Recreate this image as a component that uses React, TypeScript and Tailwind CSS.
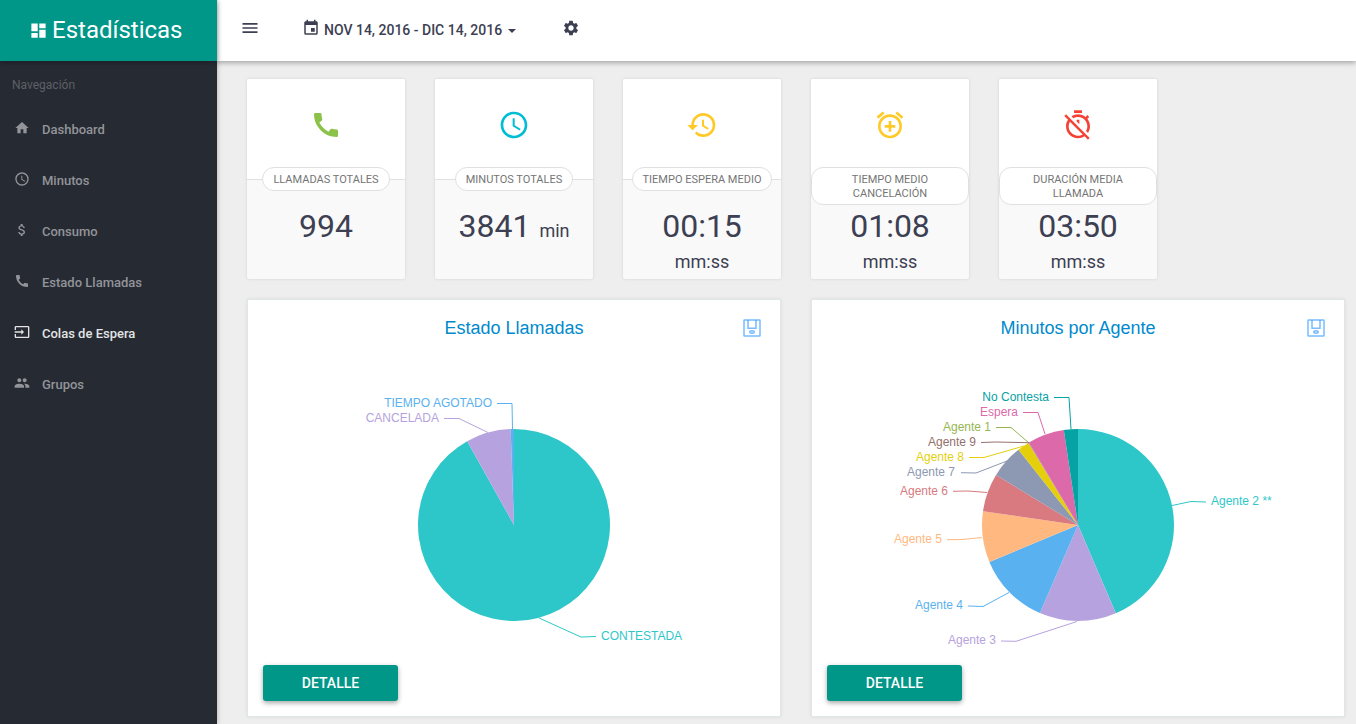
import type { ReactNode } from 'react';
import type { IconType } from 'react-icons';
import {
  MdAccessTime,
  MdAlarmAdd,
  MdAttachMoney,
  MdCall,
  MdDashboard,
  MdEvent,
  MdHistory,
  MdHome,
  MdInput,
  MdMenu,
  MdPeople,
  MdSettings,
} from 'react-icons/md';

type NavItem = { label: string; icon: IconType; active?: boolean };

const navItems: NavItem[] = [
  { label: 'Dashboard', icon: MdHome },
  { label: 'Minutos', icon: MdAccessTime },
  { label: 'Consumo', icon: MdAttachMoney },
  { label: 'Estado Llamadas', icon: MdCall },
  { label: 'Colas de Espera', icon: MdInput, active: true },
  { label: 'Grupos', icon: MdPeople },
];

function TimerOffIcon({ className }: { className?: string }) {
  return (
    <svg viewBox="0 0 24 24" fill="currentColor" className={className} aria-hidden="true">
      <path d="M19.04 4.55l-1.42 1.42C16.07 4.74 14.12 4 12 4c-1.83 0-3.53.55-4.95 1.48l1.46 1.46C9.53 6.35 10.73 6 12 6c3.87 0 7 3.13 7 7 0 1.27-.35 2.47-.94 3.49l1.45 1.45C20.45 16.53 21 14.83 21 13c0-2.12-.74-4.07-1.97-5.61l1.42-1.42-1.41-1.42zM15 1H9v2h6V1zm-4 8.44l2 2V8h-2v1.44zM3.02 4L1.75 5.27 4.5 8.03C3.55 9.45 3 11.16 3 13c0 4.97 4.02 9 9 9 1.84 0 3.55-.55 4.98-1.5l2.5 2.5 1.27-1.27-7.71-7.71L3.02 4zM12 20c-3.87 0-7-3.13-7-7 0-1.28.35-2.48.95-3.52l9.56 9.56c-1.03.61-2.23.96-3.51.96z" />
    </svg>
  );
}

type Stat = { label: string; value: string; unit?: string; stacked?: boolean; icon: IconType; color: string };

const stats: Stat[] = [
  { label: 'Llamadas totales', value: '994', icon: MdCall, color: 'text-[#8bc34a]' },
  { label: 'Minutos totales', value: '3841', unit: 'min', icon: MdAccessTime, color: 'text-[#00bcd4]' },
  { label: 'Tiempo espera medio', value: '00:15', unit: 'mm:ss', stacked: true, icon: MdHistory, color: 'text-[#ffca28]' },
  { label: 'Tiempo medio cancelación', value: '01:08', unit: 'mm:ss', stacked: true, icon: MdAlarmAdd, color: 'text-[#ffca28]' },
  { label: 'Duración media llamada', value: '03:50', unit: 'mm:ss', stacked: true, icon: TimerOffIcon, color: 'text-[#f44336]' },
];

/* start and end are clockwise degrees from twelve o'clock */
type Slice = {
  name: string;
  color: string;
  start: number;
  end: number;
  line: string;
  x: number;
  y: number;
  anchor: 'start' | 'end';
};

const callStatus: Slice[] = [
  { name: 'CONTESTADA', color: '#2ec7c9', start: 0, end: 330.8, line: '291,318 333,337 348,336.5', x: 353, y: 336, anchor: 'start' },
  { name: 'CANCELADA', color: '#b6a2de', start: 330.8, end: 358, line: '240,132.5 211,118.5 196,118.5', x: 191, y: 118, anchor: 'end' },
  { name: 'TIEMPO AGOTADO', color: '#5ab1ef', start: 358, end: 360, line: '264.5,129 264,103.5 249,103.5', x: 244, y: 103, anchor: 'end' },
];

const agentMinutes: Slice[] = [
  { name: 'Agente 2 **', color: '#2ec7c9', start: 0, end: 156.8, line: '360,205.5 379,201.5 394,202', x: 399, y: 201, anchor: 'start' },
  { name: 'Agente 3', color: '#b6a2de', start: 156.8, end: 203.4, line: '265,321.5 204,341.3 189,341', x: 184, y: 340, anchor: 'end' },
  { name: 'Agente 4', color: '#5ab1ef', start: 203.4, end: 247.4, line: '197,292.5 171,306.5 156,306', x: 151, y: 305, anchor: 'end' },
  { name: 'Agente 5', color: '#ffb980', start: 247.4, end: 278.3, line: '170,237.5 150,239.5 135,239.7', x: 130, y: 239, anchor: 'end' },
  { name: 'Agente 6', color: '#d87a80', start: 278.3, end: 301.4, line: '175,192.5 156,191 141,191.3', x: 136, y: 191, anchor: 'end' },
  { name: 'Agente 7', color: '#8d98b3', start: 301.4, end: 321.7, line: '195,161 164,173 149,172.7', x: 143, y: 172, anchor: 'end' },
  { name: 'Agente 8', color: '#e5cf0d', start: 321.7, end: 328.8, line: '212,146 172,157.5 157,157.5', x: 152, y: 157, anchor: 'end' },
  { name: 'Agente 1', color: '#97b552', start: 328.8, end: 329, line: '217,143 199,127.5 184,127.5', x: 179, y: 127, anchor: 'end' },
  { name: 'Agente 9', color: '#95706d', start: 329, end: 329.2, line: '217,142.7 184,142 169,142.5', x: 164, y: 142, anchor: 'end' },
  { name: 'Espera', color: '#dc69aa', start: 329.2, end: 351.5, line: '233,134 226,112.5 211,112.5', x: 206, y: 112, anchor: 'end' },
  { name: 'No Contesta', color: '#07a2a4', start: 351.5, end: 360, line: '259,129 257,97.5 242,97.5', x: 237, y: 97, anchor: 'end' },
];

const CENTER_X = 266;
const CENTER_Y = 225;
const RADIUS = 96;

function slicePath(start: number, end: number) {
  const point = (deg: number) => {
    const rad = (deg * Math.PI) / 180;
    return `${(CENTER_X + RADIUS * Math.sin(rad)).toFixed(2)},${(CENTER_Y - RADIUS * Math.cos(rad)).toFixed(2)}`;
  };
  return `M${CENTER_X},${CENTER_Y} L${point(start)} A${RADIUS},${RADIUS} 0 ${end - start > 180 ? 1 : 0} 1 ${point(end)} Z`;
}

function PieChart({ title, slices }: { title: string; slices: Slice[] }) {
  return (
    <svg viewBox="0 56 532 300" className="block h-[300px] w-full" role="img" aria-label={title}>
      {slices.map((s) => (
        <path key={s.name} d={slicePath(s.start, s.end)} fill={s.color} />
      ))}
      {slices.map((s) => (
        <g key={s.name}>
          <polyline points={s.line} fill="none" stroke={s.color} strokeWidth="1" />
          <text
            x={s.x}
            y={s.y + 4}
            textAnchor={s.anchor}
            fill={s.color}
            className="font-['Liberation_Sans',sans-serif] text-[12px]"
          >
            {s.name}
          </text>
        </g>
      ))}
    </svg>
  );
}

function SaveIcon() {
  return (
    <svg width="18" height="18" viewBox="0 0 18 18" fill="none" stroke="#1e90ff" strokeOpacity="0.6" strokeWidth="1.5">
      <rect x="1" y="1" width="16" height="16" rx="0.5" />
      <path d="M5 1v8.2h8V1" />
      <ellipse cx="9" cy="13" rx="2.2" ry="1.2" />
    </svg>
  );
}

function ChartPanel({ title, children }: { title: string; children: ReactNode }) {
  return (
    <section className="border border-[#e0e7e7] bg-white shadow-[0_0_3px_rgba(0,0,0,0.1)]">
      <div className="grid h-14 grid-cols-[1fr_auto_1fr] items-center px-[19px]">
        <h2 className="col-start-2 font-['Liberation_Sans',sans-serif] text-[18px] leading-6 text-[#008acd]">{title}</h2>
        <button type="button" aria-label={`Guardar ${title}`} className="justify-self-end">
          <SaveIcon />
        </button>
      </div>
      {children}
      <div className="px-[15px] pt-[9px] pb-[15px]">
        <button
          type="button"
          className="block h-9 w-[135px] rounded-[3px] bg-[#009688] text-center text-[14px] font-medium text-white uppercase shadow-[0_2px_5px_rgba(0,0,0,0.35)]"
        >
          Detalle
        </button>
      </div>
    </section>
  );
}

function StatCard({ stat }: { stat: Stat }) {
  const Icon = stat.icon;
  return (
    <article className="flex h-[200px] flex-col rounded-[2px] bg-[#f9f9f9] text-center shadow-[0_0_3px_rgba(0,0,0,0.12)]">
      <div className="flex h-[101px] shrink-0 items-center justify-center rounded-t-[2px] border-b border-[#e0e0e0] bg-white pb-2">
        <Icon className={`size-8 ${stat.color}`} aria-hidden="true" />
      </div>
      <div className="-mt-[13px] flex h-[42px] shrink-0 items-start justify-center">
        <h3 className="rounded-[12px] border border-[#e0e0e0] bg-white px-[10px] pt-[5px] pb-[3px] text-[11px] leading-[14px] text-[#757575] uppercase">
          {stat.label}
        </h3>
      </div>
      <div className={stat.stacked ? 'flex flex-col' : 'flex items-baseline justify-center gap-[9px]'}>
        <p className="text-[32px] leading-[34px]">{stat.value}</p>
        {stat.unit && <p className="text-[18px] leading-[38px]">{stat.unit}</p>}
      </div>
    </article>
  );
}

export default function App() {
  return (
    <div className="flex min-h-screen bg-[#eeeeee] font-[Roboto,sans-serif] text-[#3c4052]">
      <aside className="z-20 flex w-[217px] shrink-0 flex-col bg-[#262a33] shadow-[0_0_5px_rgba(0,0,0,0.3)]">
        <a
          href="#inicio"
          className="flex h-[61px] items-center gap-1 bg-[#009688] pb-[2px] pl-[29px] text-[24px] text-white shadow-[0_2px_5px_rgba(0,0,0,0.26)]"
        >
          <MdDashboard className="mt-[2px] size-[19px]" aria-hidden="true" />
          Estadísticas
        </a>
        <p className="px-3 pt-4 pb-[11px] text-[12px] leading-4 text-[#5d6066]">Navegación</p>
        <nav>
          <ul>
            {navItems.map(({ label, icon: Icon, active }) => (
              <li key={label}>
                <a
                  href={`#${label.toLowerCase().replace(/ /g, '-')}`}
                  aria-current={active ? 'page' : undefined}
                  className={`flex h-[51px] items-center gap-3 pl-[14px] text-[13px] font-medium ${active ? 'text-[#e2e3e4]' : 'text-[#929499]'}`}
                >
                  <Icon className="mb-1 size-4" aria-hidden="true" />
                  {label}
                </a>
              </li>
            ))}
          </ul>
        </nav>
      </aside>

      <div className="flex min-w-0 grow flex-col">
        <header className="z-10 flex h-[61px] shrink-0 items-center bg-white pb-[5px] pl-[23px] shadow-[0_2px_5px_rgba(0,0,0,0.3)]">
          <button type="button" aria-label="Menú">
            <MdMenu className="size-5" />
          </button>
          <button type="button" className="ml-[42px] flex items-center text-[14px] font-medium uppercase">
            <MdEvent className="mr-1 size-[18px]" aria-hidden="true" />
            <span className="pt-1">Nov 14, 2016 - Dic 14, 2016</span>
            <svg width="8" height="4" viewBox="0 0 8 4" className="mt-[5px] ml-[6px]" fill="currentColor" aria-hidden="true">
              <path d="M0 0h8L4 4z" />
            </svg>
          </button>
          <button type="button" aria-label="Configuración" className="ml-[46px]">
            <MdSettings className="size-[18px]" />
          </button>
        </header>

        <main className="flex flex-col gap-5 pt-[18px] pr-[11px] pb-[7px] pl-[30px]">
          <div className="grid grid-cols-6 gap-[30px]">
            {stats.map((stat) => (
              <StatCard key={stat.label} stat={stat} />
            ))}
          </div>
          <div className="grid grid-cols-2 gap-[30px]">
            <ChartPanel title="Estado Llamadas">
              <PieChart title="Estado Llamadas" slices={callStatus} />
            </ChartPanel>
            <ChartPanel title="Minutos por Agente">
              <PieChart title="Minutos por Agente" slices={agentMinutes} />
            </ChartPanel>
          </div>
        </main>
      </div>
    </div>
  );
}
